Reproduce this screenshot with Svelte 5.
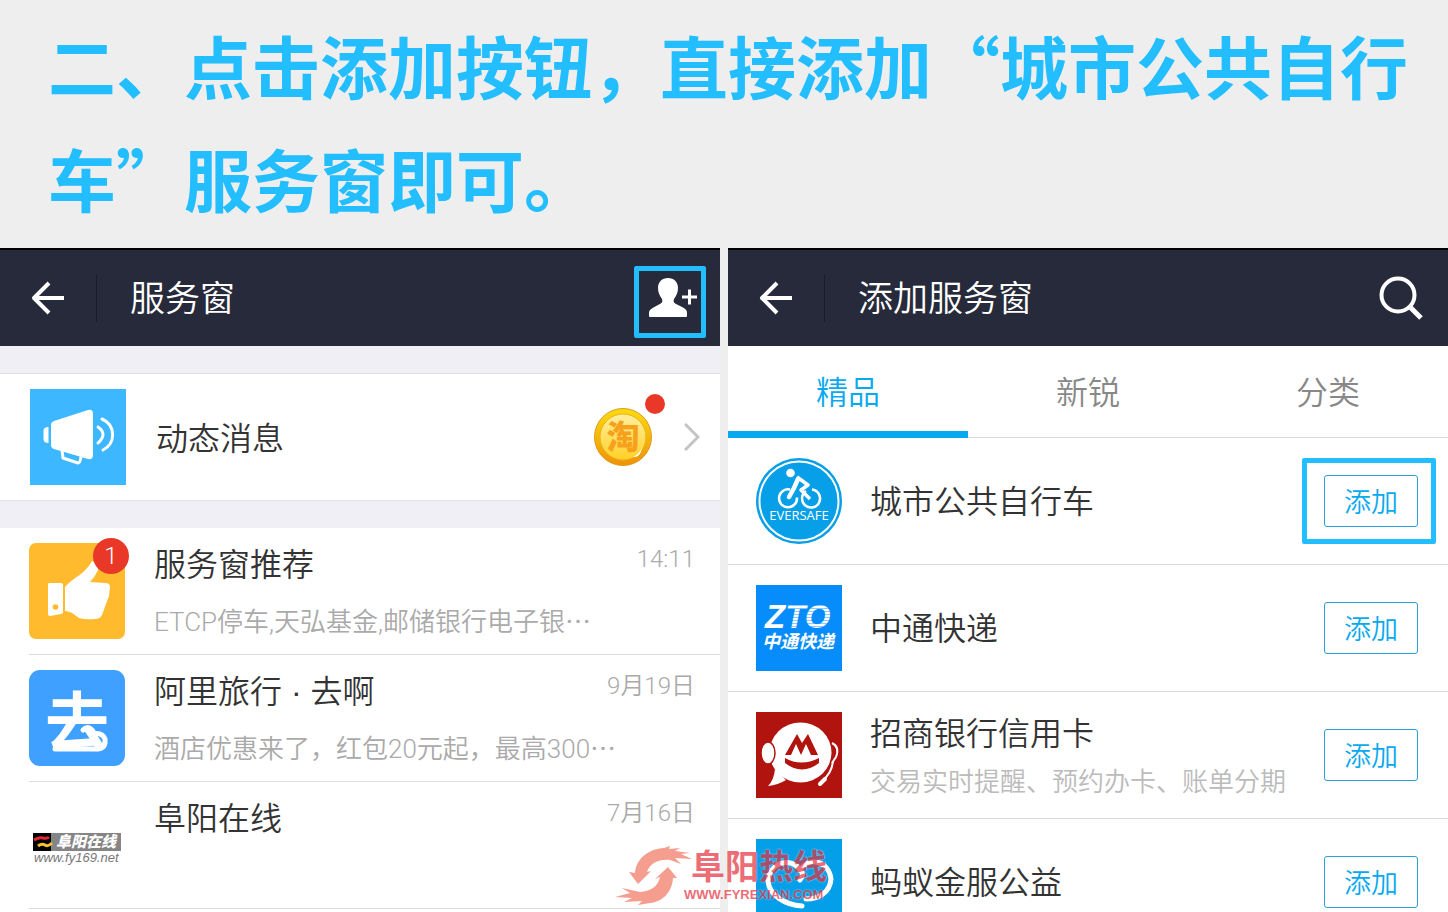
<script>
    let messages = [
        { icon: "thumb", title: "服务窗推荐", text: "ETCP停车,天弘基金,邮储银行电子银⋯", time: "14:11", unread: 1 },
        { icon: "travel", title: "阿里旅行 · 去啊", text: "酒店优惠来了，红包20元起，最高300⋯", time: "9月19日" },
        { icon: "fuyang", title: "阜阳在线", text: "", time: "7月16日" }
    ];

    let tabs = ["精品", "新锐", "分类"];
    let active = $state(0);

    let services = [
        { icon: "bike", title: "城市公共自行车", marked: true },
        { icon: "zto", title: "中通快递" },
        { icon: "cmb", title: "招商银行信用卡", text: "交易实时提醒、预约办卡、账单分期" },
        { icon: "heart", title: "蚂蚁金服公益" }
    ];
</script>

{#snippet backButton()}
    <button class="back" aria-label="返回">
        <svg width="34" height="34" viewBox="0 0 34 34" fill="none" stroke="#fff" stroke-width="4">
            <path d="M18 2 3 17l15 15M3 17h30" stroke-linejoin="round"/>
        </svg>
    </button>
{/snippet}

<div class="page" lang="zh-CN">
    <h1>二、点击添加按钮，直接添加“城市公共自行车”服务窗即可。</h1>

    <div class="screens">
        <section class="screen">
            <header>
                {@render backButton()}
                <h2>服务窗</h2>
                <button class="addUser" aria-label="添加服务窗">
                    <svg width="50" height="42" viewBox="0 0 50 42">
                        <path fill="#fff" d="M20 1c6 0 10 4 10 10 0 5-2 8-4 11-1 3 0 4 4 6 6 3 9 4 9 8v3q0 1-1 1H2q-1 0-1-1v-3c0-4 4-5 9-8 4-2 5-3 4-6-2-3-4-6-4-11C10 5 14 1 20 1z"/>
                        <path stroke="#fff" stroke-width="3" d="M34 20h15M41.500 12.500v15"/>
                    </svg>
                    <span class="mark"></span>
                </button>
            </header>

            <a class="news" href="#news">
                <svg width="96" height="96" viewBox="0 0 96 96">
                    <rect width="96" height="96" fill="#3db7ff"/>
                    <g fill="#fff">
                        <path d="M24 32 58 21q5-1 5 4v41q0 5-5 4L24 60q-3-1-3-4V36q0-3 3-4z"/>
                        <path d="M18.500 38v16q-5 0-5-4v-8q0-4 5-4z"/>
                    </g>
                    <g fill="none" stroke="#fff" stroke-width="3" stroke-linecap="round">
                        <path d="m32 61 1 8 15 5q2 0 3-6" stroke-linejoin="round"/>
                        <path d="M68 38q10 7 0 16M72 30c14 6 14 25 1 31"/>
                    </g>
                </svg>
                <span class="newsTitle">动态消息</span>
                <span class="coin">
                    <svg width="58" height="58" viewBox="0 0 58 58">
                        <defs>
                            <linearGradient id="rim" x1="0" y1="0" x2="0" y2="1">
                                <stop offset="0" stop-color="#fbdc10"/>
                                <stop offset="1" stop-color="#ef9108"/>
                            </linearGradient>
                            <linearGradient id="face" x1="0" y1="0" x2="0" y2="1">
                                <stop offset="0" stop-color="#fff0a0"/>
                                <stop offset="1" stop-color="#ffd026"/>
                            </linearGradient>
                        </defs>
                        <circle cx="29" cy="29" r="28.500" fill="url(#rim)" stroke="#e09a20"/>
                        <circle cx="29" cy="29" r="23" fill="url(#face)" stroke="#eeb21b"/>
                        <text x="29" y="41" font-size="33" font-weight="900" fill="#f6a01c" text-anchor="middle">淘</text>
                        <path d="M39 49q6-3 9-9-2 10-9 9z" fill="#fff"/>
                    </svg>
                    <span class="dot"></span>
                </span>
                <svg width="16" height="28" viewBox="0 0 16 28" fill="none" stroke="#c4c4c6" stroke-width="3">
                    <path d="m1 1 13 13L1 27"/>
                </svg>
            </a>

            <ul class="messages">
                {#each messages as m}
                    <li>
                        <div class="messageIcon">
                            {#if m.icon === "thumb"}
                                <svg width="96" height="96" viewBox="0 0 96 96">
                                    <rect width="96" height="96" rx="7" fill="#ffbb2d"/>
                                    <path fill="#fff" d="M20 40h12q2 0 2 2v27q0 2-2 2l-11 2q-2 0-2-2V42q0-2 1-2z"/>
                                    <circle cx="26.500" cy="64" r="2.800" fill="#ffbb2d"/>
                                    <path fill="#fff" d="M36 44q5-6 16-13 8-7 11-13 7 3 6 9-3 7-8 12l15 1q5 0 5 4l-1 9-7 19q-2 4-7 4-9 1-16-1l-7-5q-4-2-7-2z"/>
                                </svg>
                            {:else if m.icon === "travel"}
                                <svg width="96" height="96" viewBox="0 0 96 96">
                                    <rect width="96" height="96" rx="11" fill="#40a0ff"/>
                                    <text x="48" y="75" font-size="64" font-weight="700" fill="#fff" text-anchor="middle">去</text>
                                    <path d="M54 60q4-4 8-1 3 2 2 5 9-2 12 5 1 9-7 10H26" fill="none" stroke="#fff" stroke-width="5" stroke-linecap="round"/>
                                </svg>
                            {:else}
                                <svg width="96" height="96" viewBox="0 0 96 96">
                                    <rect x="4" y="36" width="88" height="18" fill="#858585"/>
                                    <rect x="4" y="36" width="18" height="18" fill="#000"/>
                                    <path d="M5 43q5-3 9-2t6-1" fill="none" stroke="#e02838" stroke-width="3"/>
                                    <path d="M9 49q4-3 7-1t7-2" fill="none" stroke="#f3c32c" stroke-width="3"/>
                                    <text x="27" y="50" font-size="15" font-weight="900" font-style="italic" fill="#fff">阜阳在线</text>
                                    <text class="latin" x="5" y="65" font-size="13" font-style="italic" fill="#777">www.fy169.net</text>
                                </svg>
                            {/if}
                            {#if m.unread}
                                <span class="badge">{m.unread}</span>
                            {/if}
                        </div>
                        <div class="messageBody">
                            <div class="messageTop">
                                <h3>{m.title}</h3>
                                <time>{m.time}</time>
                            </div>
                            <p>{m.text}</p>
                        </div>
                    </li>
                {/each}
            </ul>
        </section>

        <section class="screen white">
            <header>
                {@render backButton()}
                <h2>添加服务窗</h2>
                <button class="search" aria-label="搜索">
                    <svg width="46" height="46" viewBox="0 0 46 46" fill="none" stroke="#fff" stroke-width="4">
                        <circle cx="20" cy="20" r="16.500"/>
                        <path d="m31 31 12 12" stroke-width="5"/>
                    </svg>
                </button>
            </header>

            <nav>
                {#each tabs as tab, i}
                    <button class:active={active === i} onclick={() => active = i}>{tab}</button>
                {/each}
            </nav>

            <ul class="services">
                {#each services as s}
                    <li>
                        {#if s.icon === "bike"}
                            <svg width="86" height="86" viewBox="0 0 86 86">
                                <circle cx="43" cy="43" r="43" fill="#079fe7"/>
                                <circle cx="43" cy="43" r="39.500" fill="none" stroke="#fff" stroke-width="2"/>
                                <circle cx="34.500" cy="15" r="4.300" fill="#fff"/>
                                <g fill="none" stroke="#fff" stroke-width="2.500">
                                    <path d="M34 31.500a9 9 0 1 0 7 8M50 33a9 9 0 1 0 6-1.500"/>
                                    <path d="M41 19 52 27l-7 5 9 9" stroke-width="3.500" stroke-linejoin="round"/>
                                    <path d="m42 21-4 9-5 9" stroke-width="4.500" stroke-linecap="round"/>
                                </g>
                                <text class="openSans" x="43" y="62" font-size="13" font-weight="400" fill="#fff" text-anchor="middle">EVERSAFE</text>
                            </svg>
                        {:else if s.icon === "zto"}
                            <svg width="86" height="86" viewBox="0 0 86 86">
                                <defs>
                                    <pattern id="stripes" width="3" height="3" patternUnits="userSpaceOnUse">
                                        <rect width="3" height="3" fill="#8fcbff"/>
                                        <rect width="3" height="2" fill="#fff"/>
                                    </pattern>
                                </defs>
                                <rect width="86" height="86" fill="#078cfb"/>
                                <text class="latin" x="9" y="43" font-size="33" font-weight="700" font-style="italic" fill="#fff">Z<tspan fill="url(#stripes)">TO</tspan></text>
                                <text x="6" y="63" font-size="18" font-weight="700" font-style="italic" fill="#fff">中通快递</text>
                            </svg>
                        {:else if s.icon === "cmb"}
                            <svg width="86" height="86" viewBox="0 0 86 86">
                                <rect width="86" height="86" fill="#b1130f"/>
                                <ellipse cx="44.500" cy="40.500" rx="31" ry="30" fill="#fff"/>
                                <path d="M19 57q-1 11-7 17 10-1 18-6z" fill="#fff"/>
                                <ellipse cx="12" cy="41" rx="7" ry="11" fill="#fff" stroke="#b1130f" stroke-width="1.500"/>
                                <path d="M76 31q8 4 4 14l-4 6" fill="none" stroke="#fff" stroke-width="2"/>
                                <path d="M77 49q-1 12-11 20" fill="none" stroke="#fff" stroke-width="2"/>
                                <path d="m64 72 5-5" stroke="#fff" stroke-width="4" stroke-linecap="round"/>
                                <path d="m29 43 12-21 5 9 6-9 10 21h-7l-5-11-5 11-5-11-5 11z" fill="#b1130f"/>
                                <path d="M29 46q16 9 34 0v5q-17 13-34 0z" fill="#b1130f"/>
                            </svg>
                        {:else}
                            <svg width="86" height="86" viewBox="0 0 86 86">
                                <rect width="86" height="86" fill="#049fe9"/>
                                <path d="M44 41q5-6 0-10C36 18 14 22 12 42c1 14 17 24 34 25M44 31c9-14 29-9 31 9-1 14-13 20-25 20" fill="none" stroke="#fff" stroke-width="5" stroke-linecap="round"/>
                            </svg>
                        {/if}
                        <div class="serviceBody">
                            <h3>{s.title}</h3>
                            {#if s.text}
                                <p>{s.text}</p>
                            {/if}
                        </div>
                        <button class="add">
                            添加
                            {#if s.marked}<span class="mark wide"></span>{/if}
                        </button>
                    </li>
                {/each}
            </ul>
        </section>
    </div>

    <div class="watermark">
        <svg width="80" height="62" viewBox="0 0 80 62">
            <g fill="#f2755f">
                <path d="m24 39-9-12 6 1C22 14 34 4 50 3l6-2-1 3 11-1-5 3 15 2-9 1 11 5-17-1 6 6-11-4C45 14 36 18 33 27l4-1z"/>
                <path d="m54 22 9 11h-4C58 48 48 57 36 58l-12 2 4-4-18 1 8-4-17-1 15-4-8-5 18 4C36 46 44 42 46 32l-5 2z"/>
            </g>
        </svg>
        <div class="watermarkText">
            <strong>阜阳热线</strong>
            <b>WWW.FYREXIAN.COM</b>
        </div>
    </div>
</div>

<style>
    :global(body) {
        margin: 0;
        background: #eee;
    }

    .page {
        position: relative;
        display: flex;
        flex-direction: column;
        height: 100vh;
        overflow: hidden;
        background: #eee;
        color: #333;
        font-family: Roboto, "Noto Sans CJK SC", sans-serif;
        font-weight: 350;
    }

    h1, h2, h3, p, ul {
        margin: 0;
        padding: 0;
        font-weight: inherit;
    }

    h1 {
        padding: 8px 32px 14px 48px;
        color: #22beff;
        font: 700 68px/113px "Noto Sans CJK SC", sans-serif;
    }

    button {
        padding: 0;
        border: 0;
        background: none;
        color: inherit;
        font: inherit;
        cursor: pointer;
    }

    svg {
        display: block;
        flex: none;
    }

    svg text {
        font-family: "Noto Sans CJK SC", sans-serif;
    }

    svg .latin {
        font-family: "Liberation Sans", sans-serif;
    }

    svg .openSans {
        font-family: "Open Sans", sans-serif;
    }

    .screens {
        flex: 1;
        display: grid;
        grid-template-columns: 1fr 1fr;
        gap: 8px;
        min-height: 0;
    }

    .screen {
        overflow: hidden;
        background: #efeff5;
    }

    .white {
        background: #fff;
    }

    header {
        display: flex;
        align-items: center;
        height: 96px;
        border-top: 2px solid #000;
        background: #272a3b;
        color: #fff;
    }

    .back {
        display: flex;
        align-items: center;
        height: 48px;
        padding: 0 31px;
        border-right: 1px solid #1b1d2a;
    }

    h2 {
        flex: 1;
        padding: 4px 0 0 33px;
        font-size: 35px;
        line-height: 48px;
    }

    .addUser {
        position: relative;
        margin-right: 22px;
    }

    .search {
        margin-right: 24px;
    }

    /* highlight frames drawn over the screens */
    .mark {
        position: absolute;
        inset: -11px -8px -19px -14px;
        border: 5px solid #22beff;
        border-radius: 2px;
    }

    .wide {
        inset: -18px -19px -18px -23px;
    }

    .news {
        display: flex;
        align-items: center;
        height: 126px;
        margin: 27px 0;
        padding: 0 20px 0 30px;
        border-top: 1px solid #dfdfe4;
        border-bottom: 1px solid #dfdfe4;
        background: #fff;
        color: inherit;
        text-decoration: none;
    }

    .newsTitle {
        flex: 1;
        padding: 0 0 2px 30px;
        font-size: 32px;
    }

    .coin {
        position: relative;
        margin-right: 32px;
    }

    .dot {
        position: absolute;
        top: -14px;
        right: -13px;
        width: 20px;
        height: 20px;
        border-radius: 50%;
        background: #e93828;
    }

    .messages {
        height: 100%;
        padding-left: 29px;
        background: #fff;
        list-style: none;
    }

    .messages li {
        display: flex;
        gap: 29px;
        height: 96px;
        padding: 15px 25px 15px 0;
        border-bottom: 1px solid #ddd;
    }

    .messageIcon {
        position: relative;
    }

    .badge {
        position: absolute;
        top: -5px;
        right: -4px;
        width: 36px;
        border-radius: 50%;
        background: #e93828;
        color: #fff;
        font-size: 24px;
        line-height: 36px;
        text-align: center;
    }

    .messageBody {
        flex: 1;
        min-width: 0;
    }

    .messageTop {
        display: flex;
        justify-content: space-between;
    }

    h3 {
        font-family: "Liberation Sans", "Noto Sans CJK SC", sans-serif;
        font-size: 32px;
        line-height: 44px;
    }

    time {
        color: #aaa;
        font-size: 24px;
        line-height: 32px;
    }

    p {
        color: #aaa;
        font-size: 26px;
        line-height: 36px;
    }

    .messageBody p {
        padding-top: 17px;
    }

    nav {
        display: flex;
        height: 91px;
        border-bottom: 1px solid #d9d9d9;
    }

    nav button {
        flex: 1;
        height: 92px;
        padding-top: 2px;
        border-bottom: 7px solid transparent;
        color: #888;
        font-size: 32px;
    }

    nav .active {
        border-color: #08a9ee;
        color: #08a9ee;
    }

    .services {
        list-style: none;
    }

    .services li {
        display: flex;
        align-items: center;
        height: 126px;
        padding: 0 30px 0 28px;
        border-bottom: 1px solid #d9d9d9;
    }

    .serviceBody {
        flex: 1;
        padding: 2px 0 0 28px;
    }

    .serviceBody p {
        padding-top: 8px;
        color: #bbb;
    }

    .add {
        position: relative;
        width: 94px;
        height: 52px;
        padding-bottom: 2px;
        border: 1px solid #2a9fd8;
        border-radius: 3px;
        color: #08a9ee;
        font-size: 27px;
    }

    .watermark {
        position: absolute;
        left: 614px;
        bottom: 5px;
        display: flex;
        opacity: 0.7;
        color: #e5303c;
        pointer-events: none;
    }

    .watermarkText {
        margin-left: -10px;
        text-shadow: 0 0 2px #fff;
    }

    .watermarkText strong,
    .watermarkText b {
        display: block;
    }

    .watermarkText strong {
        padding-left: 7px;
        font: 700 34px/40px "Noto Sans CJK SC", sans-serif;
    }

    .watermarkText b {
        font: 700 13px/20px "Liberation Sans", sans-serif;
    }
</style>
